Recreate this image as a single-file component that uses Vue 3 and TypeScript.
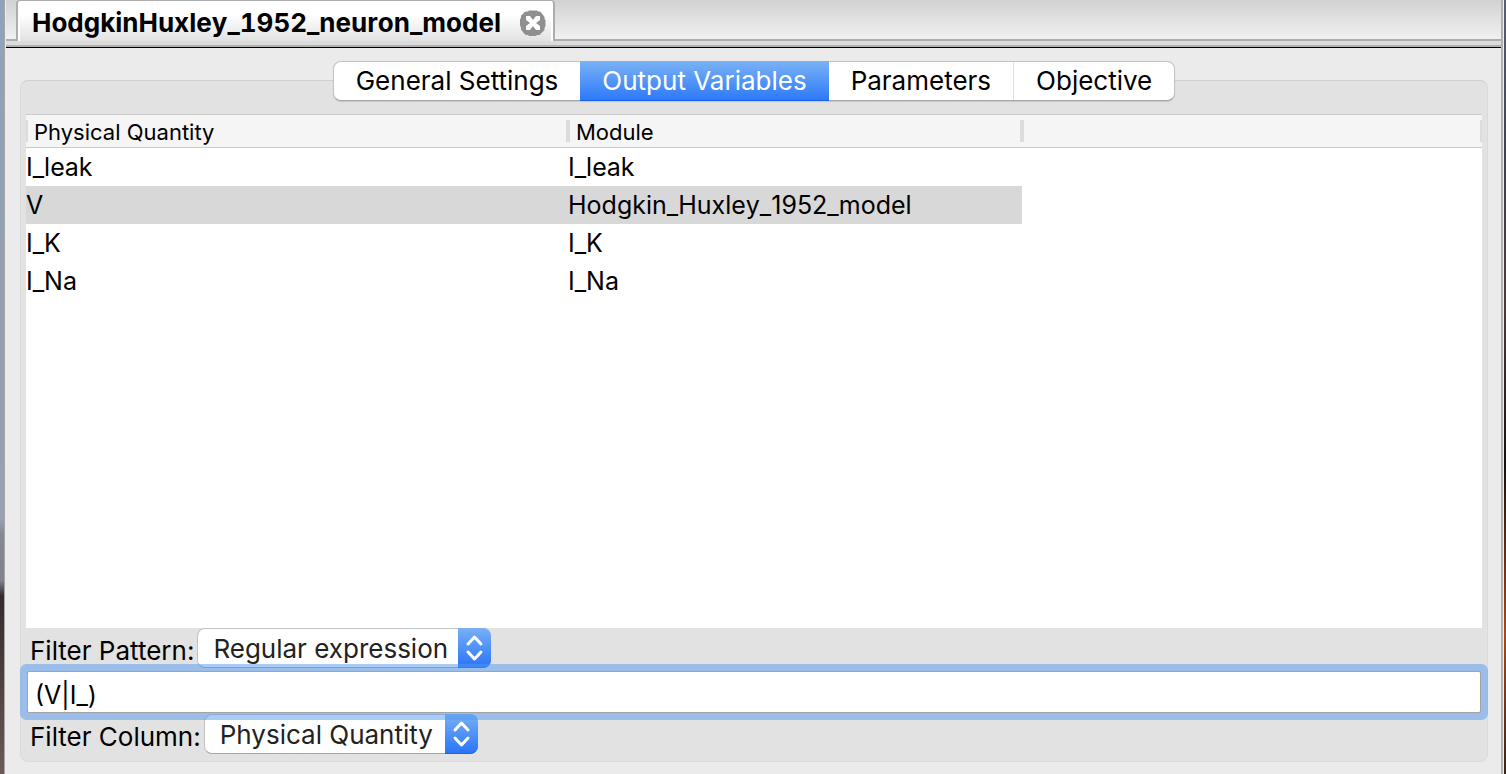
<script setup lang="ts">
import { ref } from 'vue'

interface Row { quantity: string; module: string }

const tabs: string[] = ['General Settings', 'Output Variables', 'Parameters', 'Objective']
const activeTab = ref('Output Variables')
const rows: Row[] = [
  { quantity: 'I_leak', module: 'I_leak' },
  { quantity: 'V', module: 'Hodgkin_Huxley_1952_model' },
  { quantity: 'I_K', module: 'I_K' },
  { quantity: 'I_Na', module: 'I_Na' },
]
const selected = ref(1)
const patternKind = ref('Regular expression')
const pattern = ref('(V|I_)')
const column = ref('Physical Quantity')
</script>

<template>
  <div class="desktop">
    <main class="window">
      <header class="doc-bar">
        <div class="doc-tab">
          <span class="doc-title">HodgkinHuxley_1952_neuron_model</span>
          <button class="close" type="button" aria-label="Close tab">
            <svg viewBox="0 0 26 26" width="26" height="26">
              <path d="M9 0.5h8l1 1h2l1.500 1.500 1.500 2 1.500 2v2l1 1v6l-1 2v2l-1.500 1.500-2 2-1.500 1.500h-2l-2 1H9l-1-1H6l-2-1.500-1.500-2L1 19.500v-2l-1-2v-6l1-2v-2L3 4l1.500-2L6.500 1.500H8z" fill="#8f8f8f" />
              <path d="M6 6h4l3 4 3-4h4v4l-4 3 4 3v4h-4l-3-4-3 4H6v-4l4-3-4-3z" fill="#fff" />
            </svg>
          </button>
        </div>
        <div class="doc-rest"></div>
      </header>
      <div class="doc-strip"></div>

      <section class="content">
        <nav class="segments" role="tablist">
          <button
            v-for="tab in tabs"
            :key="tab"
            type="button"
            role="tab"
            class="segment"
            :class="{ active: tab === activeTab }"
            :aria-selected="tab === activeTab"
            @click="activeTab = tab"
          >{{ tab }}</button>
        </nav>

        <div class="group">
          <div class="table-area">
            <table>
              <colgroup>
                <col class="col-quantity" />
                <col class="col-module" />
                <col />
              </colgroup>
              <thead>
                <tr>
                  <th scope="col">Physical Quantity</th>
                  <th scope="col">Module</th>
                  <th></th>
                </tr>
              </thead>
              <tbody>
                <tr v-for="(row, i) in rows" :key="row.quantity" :class="{ selected: i === selected }" @click="selected = i">
                  <td>{{ row.quantity }}</td>
                  <td>{{ row.module }}</td>
                  <td></td>
                </tr>
              </tbody>
            </table>
          </div>

          <div class="filter-row">
            <label for="pattern-kind">Filter Pattern:</label>
            <span class="popup popup-pattern">
              <select id="pattern-kind" v-model="patternKind">
                <option>Regular expression</option>
                <option>Wildcard</option>
                <option>Fixed string</option>
              </select>
              <span class="stepper">
                <svg viewBox="0 0 33 40" width="33" height="40">
                  <path d="M10 16l6.500-7 6.500 7M10 24l6.500 7 6.500-7" />
                </svg>
              </span>
            </span>
          </div>
          <input v-model="pattern" class="pattern" type="text" aria-label="Filter pattern" />
          <div class="filter-row">
            <label for="filter-column">Filter Column:</label>
            <span class="popup popup-column">
              <select id="filter-column" v-model="column">
                <option>Physical Quantity</option>
                <option>Module</option>
              </select>
              <span class="stepper">
                <svg viewBox="0 0 33 40" width="33" height="40">
                  <path d="M10 16l6.500-7 6.500 7M10 24l6.500 7 6.500-7" />
                </svg>
              </span>
            </span>
          </div>
        </div>
      </section>
    </main>
  </div>
</template>

<style>
body {
  margin: 0;
}
</style>

<style scoped>
* {
  box-sizing: border-box;
}

.desktop {
  display: flex;
  min-height: 100vh;
  padding: 0 2px 0 4px;
  background:
    linear-gradient(#5a5f70, #3f414c 20%, #4a3a3a 40%, #15100f 60%, #a8481c 82%, #35241a) right / 2px 100% no-repeat,
    linear-gradient(#8fa3bd, #93a0b0 40%, #96a2b2 67%, #858890 69%, #80838c 75%, #332b2c 77%, #6b5a56) left / 4px 100% no-repeat;
  font-family: Inter, "Liberation Sans", sans-serif;
  font-size: 26px;
  color: #000;
}

button,
select,
input {
  margin: 0;
  font: inherit;
  color: inherit;
}

.window {
  display: flex;
  flex: 1;
  flex-direction: column;
  min-width: 0;
  border-left: 1px solid #a6a6a6;
  border-right: 1px solid #f0f0f0;
  background: #ebebeb;
  box-shadow: inset -2px 0 #b0b0b0;
}

.doc-bar {
  display: flex;
  height: 41px;
  margin: 0 2px 0 1px;
  background: linear-gradient(#d2d2d2, #f2f2f2);
}

.doc-bar::before {
  content: "";
  width: 10px;
  border-bottom: 2px solid #adadad;
}

.doc-tab {
  display: flex;
  align-items: center;
  gap: 19px;
  padding: 3px 7px 0 14px;
  border: solid #adadad;
  border-width: 1px 2px 0;
  border-radius: 4px 4px 0 0;
  background: linear-gradient(#fff 35%, #e2e2e2);
  box-shadow: inset 2px 0 #fff, inset -2px 0 #fff;
}

.doc-title {
  font-weight: 700;
  font-kerning: none;
  font-variant-numeric: tabular-nums;
  white-space: nowrap;
}

.close {
  width: 26px;
  height: 26px;
  padding: 0;
  border: 0;
  background: none;
}

.close svg {
  display: block;
}

.doc-rest {
  flex: 1;
  border-bottom: 2px solid #adadad;
}

.doc-strip {
  height: 7px;
  margin: 0 2px 0 1px;
  border-bottom: 1px solid #000;
  background: linear-gradient(#dcdcdc 4px, #b0b0b0 4px);
}

.content {
  display: flex;
  flex: 1;
  flex-direction: column;
  padding: 13px 15px 12px;
}

.segments {
  z-index: 1;
  display: flex;
  align-self: center;
  height: 40px;
  margin-bottom: -21px;
  border: 1px solid #c3c3c3;
  border-bottom-color: #a5a5a5;
  border-radius: 8px;
  background: #fff;
  box-shadow: 0 1px 1px rgba(0, 0, 0, 0.12);
}

.segment {
  padding: 0 22px 1px;
  border: 0;
  background: none;
}

.segment:last-child {
  border-left: 1px solid #e0e0e0;
}

.segment.active {
  margin: -1px 0;
  border-bottom: 1px solid #1c60f0;
  background: linear-gradient(#7ab2f5, #2d7af8);
  color: #fff;
}

.group {
  display: flex;
  flex: 1;
  flex-direction: column;
  padding: 33px 5px 7px;
  border: 1px solid #dadada;
  border-top-color: #cfcfcf;
  border-radius: 8px;
  background: #e2e2e2;
}

.table-area {
  flex: 1;
  background: #fff;
}

table {
  width: 100%;
  border-collapse: separate;
  border-spacing: 0;
  table-layout: fixed;
  font-size: 25px;
}

.col-quantity {
  width: 542px;
}

.col-module {
  width: 454px;
}

th {
  height: 34px;
  padding: 2px 8px 0;
  border: solid #cbcbcb;
  border-width: 1px 0;
  background:
    linear-gradient(#dcdcdc, #dcdcdc) left / 2px 22px no-repeat,
    linear-gradient(#dcdcdc, #dcdcdc) right / 2px 22px no-repeat,
    #f5f5f5;
  font-size: 22px;
  font-weight: 400;
  line-height: 30px;
  text-align: left;
}

td {
  height: 38px;
  padding: 0;
  font-kerning: none;
  line-height: 38px;
}

.selected td:not(:last-child) {
  background: #d8d8d8;
}

.filter-row {
  display: flex;
  align-items: center;
  gap: 3px;
  height: 40px;
  padding-left: 4px;
}

.filter-row label {
  padding-top: 4px;
}

.popup {
  position: relative;
  height: 40px;
}

.popup-pattern {
  width: 294px;
}

.popup-column {
  width: 274px;
}

select {
  width: 100%;
  height: 40px;
  padding: 0 34px 0 15px;
  border: 1px solid #c3c3c3;
  border-bottom-color: #a5a5a5;
  border-radius: 8px;
  appearance: none;
  background: #fff;
  color: #222;
}

.stepper {
  position: absolute;
  inset: 0 0 0 auto;
  width: 33px;
  border-bottom: 1px solid #1c60f0;
  border-radius: 0 8px 8px 0;
  background: linear-gradient(#78b0f5, #2a75f8);
  pointer-events: none;
}

.stepper path {
  fill: none;
  stroke: #fff;
  stroke-width: 3;
  stroke-linecap: round;
  stroke-linejoin: round;
}

.pattern {
  z-index: 1;
  height: 42px;
  margin: 3px 1px 1px;
  padding: 6px 7px 0;
  border: 1px solid #a3a3a3;
  border-radius: 2px;
  outline: 0;
  background: #fff;
  box-shadow: 0 0 0 7px rgba(82, 152, 242, 0.5);
  font-size: 25px;
}
</style>
